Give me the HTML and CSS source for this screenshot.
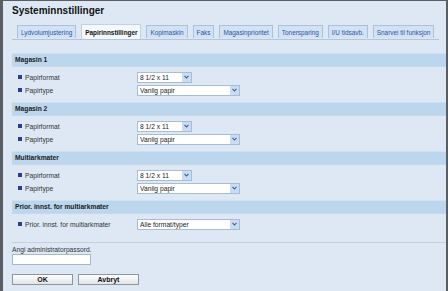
FILE: index.html
```html
<!DOCTYPE html>
<html>
<head>
<meta charset="utf-8">
<title>Systeminnstillinger</title>
<link rel="stylesheet" href="styles.css">
</head>
<body>
<div class="page">
  <h1 class="title">Systeminnstillinger</h1>

  <ul class="tabs">
    <li class="tab">Lydvolumjustering</li>
    <li class="tab active">Papirinnstillinger</li>
    <li class="tab">Kopimaskin</li>
    <li class="tab">Faks</li>
    <li class="tab">Magasinprioritet</li>
    <li class="tab">Tonersparing</li>
    <li class="tab">I/U tidsavb.</li>
    <li class="tab">Snarvei til funksjon</li>
  </ul>

  <div class="section">
    <div class="sec-head">Magasin 1</div>
    <div class="rows">
      <div class="row">
        <span class="label"><i class="bullet"></i>Papirformat</span>
        <span class="sel narrow"><select><option>8 1/2 x 11</option></select><span class="arrow"><svg width="5" height="4" viewBox="0 0 5 4"><path d="M0.5 0.8 L2.5 3 L4.5 0.8" fill="none" stroke="#3f5f8f" stroke-width="1.1"/></svg></span></span>
      </div>
      <div class="row">
        <span class="label"><i class="bullet"></i>Papirtype</span>
        <span class="sel wide"><select><option>Vanlig papir</option></select><span class="arrow"><svg width="5" height="4" viewBox="0 0 5 4"><path d="M0.5 0.8 L2.5 3 L4.5 0.8" fill="none" stroke="#3f5f8f" stroke-width="1.1"/></svg></span></span>
      </div>
    </div>
  </div>

  <div class="section">
    <div class="sec-head">Magasin 2</div>
    <div class="rows">
      <div class="row">
        <span class="label"><i class="bullet"></i>Papirformat</span>
        <span class="sel narrow"><select><option>8 1/2 x 11</option></select><span class="arrow"><svg width="5" height="4" viewBox="0 0 5 4"><path d="M0.5 0.8 L2.5 3 L4.5 0.8" fill="none" stroke="#3f5f8f" stroke-width="1.1"/></svg></span></span>
      </div>
      <div class="row">
        <span class="label"><i class="bullet"></i>Papirtype</span>
        <span class="sel wide"><select><option>Vanlig papir</option></select><span class="arrow"><svg width="5" height="4" viewBox="0 0 5 4"><path d="M0.5 0.8 L2.5 3 L4.5 0.8" fill="none" stroke="#3f5f8f" stroke-width="1.1"/></svg></span></span>
      </div>
    </div>
  </div>

  <div class="section">
    <div class="sec-head">Multiarkmater</div>
    <div class="rows">
      <div class="row">
        <span class="label"><i class="bullet"></i>Papirformat</span>
        <span class="sel narrow"><select><option>8 1/2 x 11</option></select><span class="arrow"><svg width="5" height="4" viewBox="0 0 5 4"><path d="M0.5 0.8 L2.5 3 L4.5 0.8" fill="none" stroke="#3f5f8f" stroke-width="1.1"/></svg></span></span>
      </div>
      <div class="row">
        <span class="label"><i class="bullet"></i>Papirtype</span>
        <span class="sel wide"><select><option>Vanlig papir</option></select><span class="arrow"><svg width="5" height="4" viewBox="0 0 5 4"><path d="M0.5 0.8 L2.5 3 L4.5 0.8" fill="none" stroke="#3f5f8f" stroke-width="1.1"/></svg></span></span>
      </div>
    </div>
  </div>

  <div class="section last">
    <div class="sec-head">Prior. innst. for multiarkmater</div>
    <div class="rows">
      <div class="row">
        <span class="label"><i class="bullet"></i>Prior. innst. for multiarkmater</span>
        <span class="sel wide"><select><option>Alle format/typer</option></select><span class="arrow"><svg width="5" height="4" viewBox="0 0 5 4"><path d="M0.5 0.8 L2.5 3 L4.5 0.8" fill="none" stroke="#3f5f8f" stroke-width="1.1"/></svg></span></span>
      </div>
    </div>
  </div>

  <div class="admin">
    <div class="admin-label">Angi administratorpassord.</div>
    <input class="pw" type="password">
    <div class="buttons">
      <button class="btn">OK</button>
      <button class="btn">Avbryt</button>
    </div>
  </div>
</div>
</body>
</html>
```

FILE: styles.css
```css
html, body {
 margin:0;
 padding:0;
 height:100%;
}
body {
 background-color:#5a5d62;
 font-family:"Liberation Sans",Arial,sans-serif;
 color:#333;
 overflow:hidden;
}
.page {
 margin:1px 2px 0 3px;
 height:calc(100% - 1px);
 background-color:#dde8f4;
 padding:0 0 0 9px;
 box-sizing:border-box;
}
.title {
 margin:0;
 padding-top:4px;
 font-size:10px;
 line-height:12px;
 font-weight:bold;
 color:#111;
}
.tabs {
 list-style:none;
 margin:8px 7px 0 0;
 padding:0 0 0 5px;
 display:flex;
 gap:5px;
 border-bottom:1px solid #b3c5d8;
 height:14px;
}
.tab {
 height:13px;
 box-sizing:border-box;
 padding:0 3px;
 border:1px solid #a9c1dc;
 border-bottom:none;
 background-color:#d3e2f3;
 color:#2456a8;
 font-size:6.4px;
 line-height:13px;
 white-space:nowrap;
}
.tab.active {
 height:15px;
 margin-top:-1px;
 background-color:#f5f8fb;
 border-color:#c3d2e2;
 color:#111;
 font-weight:bold;
 line-height:15px;
}
.tabs + .section {
 margin-top:13px;
}
.sec-head {
 height:14px;
 box-sizing:border-box;
 background-color:#bcd6ee;
 border-top:1px solid #cfe0f1;
 border-bottom:1px solid #c6d9ec;
 padding-left:3px;
 font-size:6.7px;
 font-weight:bold;
 line-height:12px;
 color:#1a1a1a;
}
.rows {
 padding:4px 0 6px 6px;
 display:flex;
 flex-direction:column;
 gap:1px;
}
.section.last .rows {
 padding-bottom:0;
}
.row {
 display:grid;
 grid-template-columns:119px auto;
 align-items:center;
 height:12px;
}
.label {
 display:flex;
 align-items:center;
 font-size:6.7px;
 color:#333;
 white-space:nowrap;
}
.bullet {
 display:inline-block;
 width:4px;
 height:4px;
 background-color:#23418c;
 margin-right:3px;
}
.sel {
 display:inline-flex;
 height:11px;
 box-sizing:border-box;
 border:1px solid #a7bcd5;
 background-color:#fff;
 justify-self:start;
}
.sel.narrow {
 width:55px;
}
.sel.wide {
 width:103px;
}
.sel select {
 appearance:none;
 -webkit-appearance:none;
 border:none;
 outline:none;
 background:#fff;
 margin:0;
 padding:0 0 0 2px;
 flex:1;
 min-width:0;
 height:9px;
 font-family:"Liberation Sans",Arial,sans-serif;
 font-size:6.7px;
 line-height:9px;
 color:#222;
}
.arrow {
 width:9px;
 height:9px;
 background-color:#cadcf3;
 display:flex;
 align-items:center;
 justify-content:center;
}
.admin {
 margin-top:12px;
 border-top:1px solid #c3d1df;
 padding-top:3px;
}
.admin-label {
 font-size:6.7px;
 line-height:8px;
 color:#333;
}
.pw {
 display:block;
 margin:0;
 width:79px;
 height:11px;
 box-sizing:border-box;
 border:1px solid #a5b7ca;
 background-color:#fff;
 padding:0;
}
.buttons {
 display:flex;
 gap:5px;
 margin-top:9px;
}
.btn {
 width:61px;
 height:11px;
 box-sizing:border-box;
 padding:0;
 border:1px solid #8f959c;
 background:linear-gradient(#ffffff,#e1e3e6);
 font-family:"Liberation Sans",Arial,sans-serif;
 font-size:7px;
 font-weight:bold;
 line-height:9px;
 color:#111;
}
```
